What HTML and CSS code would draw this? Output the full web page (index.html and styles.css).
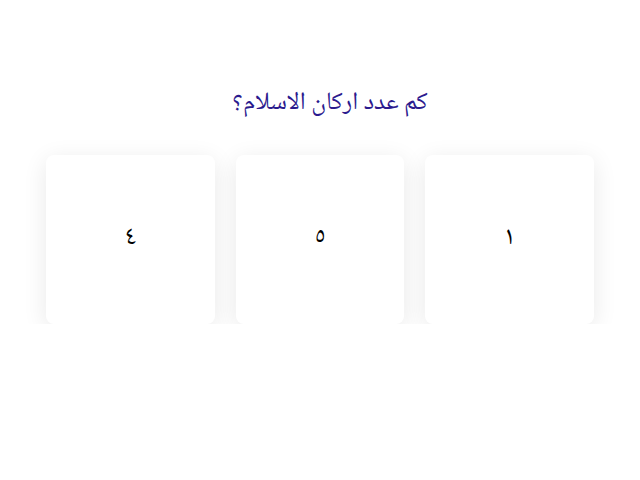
FILE: index.html
```html
<!DOCTYPE html>
<html lang="ar" dir="rtl">
<head>
  <meta charset="UTF-8" />
  <title>اركان الاسلام</title>
  <link rel="stylesheet" href="styles.css">
</head>
<body>
  <div class="quiz">
    <h1 class="question">كم عدد اركان الاسلام؟</h1>
    <div class="answers">
      <div class="answer">١</div>
      <div class="answer">٥</div>
      <div class="answer">٤</div>
    </div>
  </div>
</body>
</html>
```

FILE: styles.css
```css
body {
  margin: 0;
  background: #fff;
  font-family: "Noto Naskh Arabic", "Noto Sans Arabic", "DejaVu Sans", sans-serif;
  color: #000;
}

.quiz {
  padding: 88px 46px 0;
}

.question {
  margin: 0 0 35px;
  text-align: center;
  font-size: 25px;
  font-weight: normal;
  color: #2b1a8e;
  padding-left: 20px;
  line-height: 32px;
}

.answers {
  display: flex;
  gap: 21px;
}

.answer {
  flex: 1;
  height: 169px;
  display: flex;
  align-items: center;
  justify-content: center;
  padding-bottom: 4px;
  box-sizing: border-box;
  background: #fff;
  border-radius: 8px;
  box-shadow: 0 5px 24px rgba(0, 0, 0, 0.09);
  font-size: 26px;
}
```
